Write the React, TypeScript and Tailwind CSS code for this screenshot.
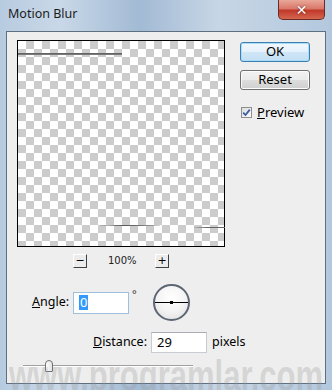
import React from "react";

const ui = { fontFamily: '"Noto Sans", "Open Sans", Arial, sans-serif' };

function SmallBtn({ label }: { label: string }) {
  return (
    <div className="w-[14px] h-[14px] border-t border-l border-t-white border-l-white border-r border-b border-r-[#404040] border-b-[#404040] bg-[#ececec] flex items-center justify-center text-[11px] leading-none text-black" style={{ fontFamily: '"DejaVu Sans", sans-serif' }}>
      {label}
    </div>
  );
}

export default function App() {
  return (
    <div className="relative w-[332px] h-[390px] overflow-hidden flex flex-col bg-[linear-gradient(90deg,#b7cbe0_0%,#c9d8e8_18%,#a2bad4_42%,#c7d6e6_66%,#b3c8de_100%)]" style={ui}>
      {/* title bar */}
      <div className="h-[31px] flex items-start justify-between shrink-0">
        <span className="pl-[8px] pt-[6px] text-[12.5px] text-[#1b1b1b] leading-[16px]">Motion Blur</span>
        <div className="mr-[7px] w-[47px] h-[20px] rounded-b-[5px] border border-t-0 border-[#6b2b24] bg-[linear-gradient(180deg,#e9a899_0%,#d9786a_45%,#c0392b_55%,#d4664f_100%)] flex items-center justify-center">
          <span className="text-white font-bold text-[14px] leading-none [text-shadow:0_0_2px_#5a1a10]" style={{ fontFamily: '"DejaVu Sans", sans-serif' }}>✕</span>
        </div>
      </div>

      {/* content panel */}
      <div className="mx-[6px] mb-[6px] flex-1 border border-[#5e6f80] bg-[#eeeeee] flex flex-col">
        <div className="flex pt-[8px] pl-[10px]">
          <div className="flex flex-col items-center">
            <div className="relative w-[208px] h-[207px] border border-black bg-[repeating-conic-gradient(#cccccc_0%_25%,#ffffff_0%_50%)] bg-[length:16px_16px]">
              <div className="absolute left-0 top-[12px] w-[104px] h-[2px] bg-[linear-gradient(180deg,#555_0%,#888_100%)]" />
              <div className="absolute left-[82px] top-[184px] w-[60px] h-[1px] bg-[linear-gradient(90deg,rgba(80,80,80,0.2),#555_40%,#777_70%,rgba(80,80,80,0.2))]" />
              <div className="absolute left-[176px] top-[186px] w-[31px] h-[1px] bg-[linear-gradient(90deg,rgba(80,80,80,0.2),#666_40%,#666_100%)]" />
            </div>
            <div className="flex items-center mt-[6px] gap-[21px]">
              <SmallBtn label="−" />
              <span className="text-[10px] text-[#222] w-[26px] text-center" style={{ fontFamily: '"DejaVu Sans", sans-serif' }}>100%</span>
              <SmallBtn label="+" />
            </div>
          </div>

          <div className="ml-[15px] flex flex-col pt-[2px]">
            <div className="w-[70px] h-[20px] rounded-[3px] border border-[#3c7fb1] bg-[linear-gradient(180deg,#f2f8fc_0%,#e5f1fb_48%,#cfe6f7_52%,#c3def3_100%)] shadow-[inset_0_0_0_1px_#a8dcf7] flex items-center justify-center text-[13px] text-black">OK</div>
            <div className="mt-[8px] w-[70px] h-[20px] rounded-[3px] border border-[#707070] bg-[linear-gradient(180deg,#f2f2f2_0%,#ebebeb_48%,#dddddd_52%,#cfcfcf_100%)] shadow-[inset_0_0_0_1px_#fcfcfc] flex items-center justify-center text-[13px] text-black">Reset</div>
            <div className="mt-[16px] ml-[1px] flex items-center gap-[5px]">
              <div className="w-[11px] h-[11px] border border-[#8f8f8f] bg-[linear-gradient(135deg,#dcdcdc,#fbfbfb)] flex items-center justify-center">
                <svg width="9" height="9" viewBox="0 0 9 9"><path d="M1.2 4.6 L3.5 7 L7.8 1.6" fill="none" stroke="#3b5aa8" strokeWidth="1.8" /></svg>
              </div>
              <span className="text-[13px] text-black leading-none"><span className="underline">P</span>review</span>
            </div>
          </div>
        </div>

        {/* angle row */}
        <div className="flex items-center mt-[16px]">
          <span className="ml-[25px] text-[12.5px] text-black"><span className="underline">A</span>ngle:</span>
          <div className="ml-[4px] w-[56px] h-[22px] border border-[#9fbfdc] bg-white flex items-center pl-[5px]">
            <span className="bg-[#3399ff] text-white text-[13px] leading-[15px] px-[1px]">0</span>
          </div>
          <span className="ml-[3px] self-start mt-[2px] text-[11px] text-[#333]">°</span>
          <div className="relative ml-[16px] w-[37px] h-[37px] rounded-full border-2 border-[#5d6774] bg-[radial-gradient(circle_at_50%_35%,#ffffff_0%,#f4f4f4_50%,#dcdcdc_100%)]">
            <div className="absolute left-0 right-0 top-[16px] h-[1px] bg-black" />
            <div className="absolute left-[15px] top-[15px] w-[3px] h-[3px] bg-black" />
          </div>
        </div>

        {/* distance row */}
        <div className="flex items-center mt-[11px]">
          <span className="ml-[86px] text-[12.5px] text-black"><span className="underline">D</span>istance:</span>
          <div className="ml-[4px] w-[56px] h-[21px] border border-[#c8ccd2] border-t-[#abadb3] bg-white flex items-center pl-[5px] text-[13px] text-black">29</div>
          <span className="ml-[5px] text-[12.5px] text-black">pixels</span>
        </div>

        {/* slider */}
        <div className="relative mt-[7px] ml-[16px] w-[170px] h-[13px]">
          <div className="absolute left-0 right-0 top-[5px] h-[2px] border-t border-t-[#a0a0a0] border-b border-b-white" />
          <div className="absolute left-[22px] top-0 w-[8px] h-[12px] rounded-t-[4px] rounded-b-[1px] border border-[#707070] bg-[linear-gradient(90deg,#ffffff,#e3e3e3)]" />
        </div>
      </div>

      {/* watermark */}
      <div className="absolute left-[9px] top-[353px] text-[31px] font-bold leading-none text-[rgba(150,150,150,0.3)] pointer-events-none whitespace-nowrap" style={{ fontFamily: '"Liberation Sans", Arial, sans-serif', transform: 'scaleY(1.45)', transformOrigin: 'top left' }}>
        www.programlar.com
      </div>
    </div>
  );
}
